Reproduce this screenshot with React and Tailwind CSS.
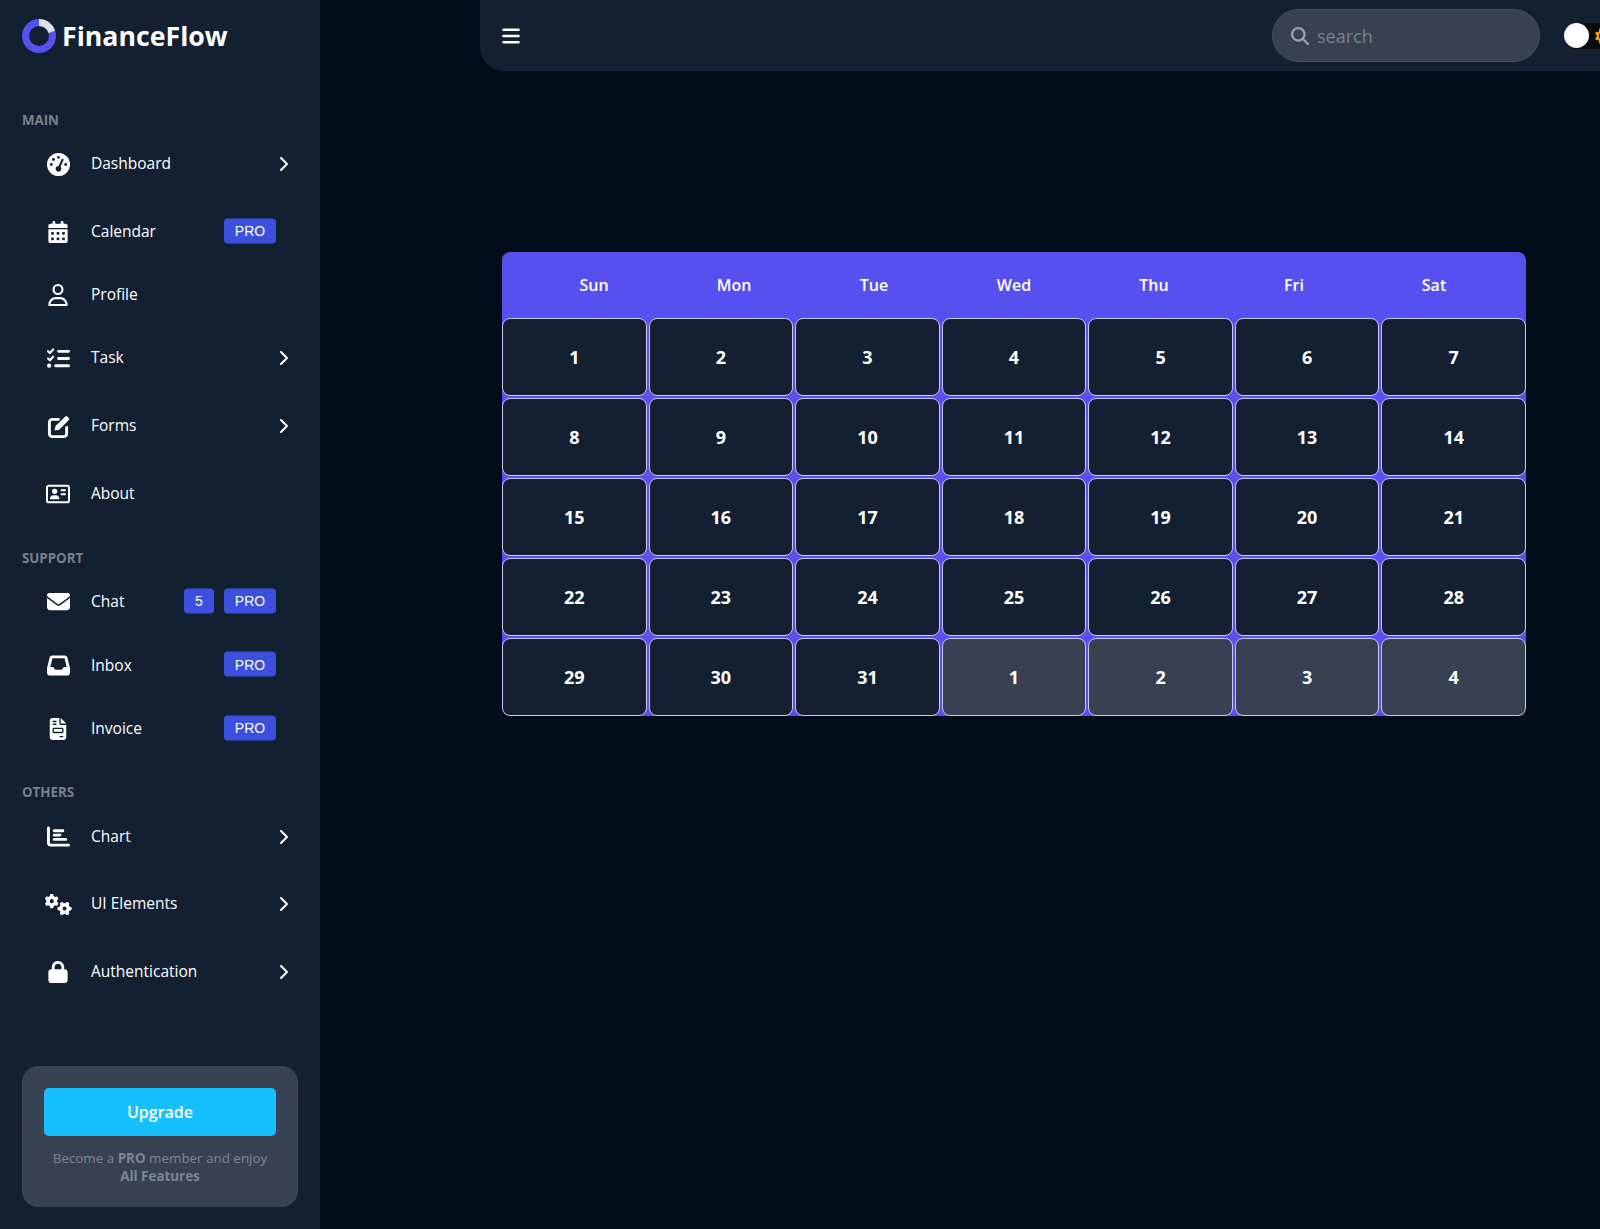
import React from "react";
import {
  FaBars,
  FaCalendarDays,
  FaChartBar,
  FaChevronRight,
  FaEnvelope,
  FaFileInvoice,
  FaGaugeHigh,
  FaGears,
  FaInbox,
  FaListCheck,
  FaLock,
  FaMagnifyingGlass,
  FaRegAddressCard,
  FaRegUser,
  FaSun,
} from "react-icons/fa6";

const EditIcon = ({ size }) => (
  <svg width={size} height={size} viewBox="0 0 24 24" fill="none">
    <path
      d="M12 4.5H5.5a3 3 0 0 0-3 3v12a3 3 0 0 0 3 3h12a3 3 0 0 0 3-3V13"
      stroke="currentColor"
      strokeWidth="3"
      strokeLinecap="round"
    />
    <path
      d="M8 16.2l.9-4.6L18.8 1.7a1.9 1.9 0 0 1 2.7 0l1.1 1.1a1.9 1.9 0 0 1 0 2.7L12.7 15.3z"
      fill="currentColor"
    />
  </svg>
);

const sections = [
  {
    title: "MAIN",
    titleClass: "mt-[58px] h-[19px]",
    items: [
      { label: "Dashboard", icon: FaGaugeHigh, size: 23, height: "h-[68px]", arrow: true },
      { label: "Calendar", icon: FaCalendarDays, size: 22, height: "h-[67px]", pro: true },
      { label: "Profile", icon: FaRegUser, size: 22, height: "h-[59px]" },
      { label: "Task", icon: FaListCheck, size: 23, height: "h-[68px]", arrow: true },
      { label: "Forms", icon: EditIcon, size: 23, height: "h-[68px]", arrow: true },
      { label: "About", icon: FaRegAddressCard, size: 24, height: "h-[67px]" },
    ],
  },
  {
    title: "SUPPORT",
    titleClass: "mt-[20px] h-[23px]",
    items: [
      { label: "Chat", icon: FaEnvelope, size: 23, height: "h-[63.5px]", pro: true, count: 5 },
      { label: "Inbox", icon: FaInbox, size: 23, height: "h-[63.5px]", pro: true },
      { label: "Invoice", icon: FaFileInvoice, size: 22, height: "h-[63px]", pro: true },
    ],
  },
  {
    title: "OTHERS",
    titleClass: "mt-[23px] h-[20px]",
    items: [
      { label: "Chart", icon: FaChartBar, size: 23, height: "h-[67px]", arrow: true },
      { label: "UI Elements", icon: FaGears, size: 27, height: "h-[68px]", arrow: true },
      { label: "Authentication", icon: FaLock, size: 22, height: "h-[68px]", arrow: true },
    ],
  },
];

const days = ["Sun", "Mon", "Tue", "Wed", "Thu", "Fri", "Sat"];

const dates = [
  ...Array.from({ length: 31 }, (_, i) => ({ day: i + 1, muted: false })),
  ...[1, 2, 3, 4].map((day) => ({ day, muted: true })),
];

const Badge = ({ children, className }) => (
  <span
    className={`absolute top-1/2 flex h-[25px] -translate-y-[13.5px] items-center justify-center rounded-[4px] bg-[#3c50e0] font-['Liberation_Sans',sans-serif] text-sm text-white ${className}`}
  >
    {children}
  </span>
);

const NavItem = ({ item }) => {
  const Icon = item.icon;
  return (
    <div className={`relative flex items-center ${item.height}`}>
      <span className="ml-[36px] flex w-[44px] justify-center text-white">
        <Icon size={item.size} />
      </span>
      <span className="ml-[11px] text-[15.5px] text-white">{item.label}</span>
      {item.count && <Badge className="left-[184px] w-[30px]">{item.count}</Badge>}
      {item.pro && <Badge className="left-[224px] w-[52px]">PRO</Badge>}
      {item.arrow && <FaChevronRight size={16} className="absolute left-[274.5px] text-white" />}
    </div>
  );
};

const Sidebar = () => (
  <aside className="flex h-full w-[320px] shrink-0 flex-col bg-[#122031]">
    <div className="mt-[19px] flex h-[34px] items-center pl-[22px]">
      <svg width="34" height="34" viewBox="0 0 34 34">
        <circle cx="17" cy="17" r="13.5" fill="none" stroke="#5750f1" strokeWidth="7" />
        <path d="M17 3.5 A13.5 13.5 0 0 1 29.8 12.8" fill="none" stroke="#dfe1e8" strokeWidth="7" />
      </svg>
      <span className="ml-[6px] text-[26.7px] font-bold text-white">FinanceFlow</span>
    </div>
    {sections.map((section) => (
      <div key={section.title}>
        <p
          className={`flex items-center pl-[22px] text-[13.3px] font-bold text-[#7b808a] ${section.titleClass}`}
        >
          {section.title}
        </p>
        {section.items.map((item) => (
          <NavItem key={item.label} item={item} />
        ))}
      </div>
    ))}
    <div className="mx-[22px] mt-[60px] h-[141px] rounded-2xl bg-[#374151] px-[22px] pt-[22px] text-center">
      <button className="h-[48px] w-full rounded-[5px] bg-[#15bffd] text-base font-semibold text-white">
        Upgrade
      </button>
      <p className="mt-[13px] text-[13.4px] leading-[18px] text-[#7f8590]">
        Become a <b>PRO</b> member and enjoy
        <b className="block">All Features</b>
      </p>
    </div>
  </aside>
);

const Topbar = () => (
  <header className="ml-[160px] flex h-[71px] w-[1140px] items-center rounded-bl-3xl bg-[#122031] pl-[21px]">
    <FaBars size={20} className="text-white" />
    <div className="ml-auto flex h-[53px] w-[268px] items-center rounded-full border border-[#444d5d] bg-[#374151] pl-[18px]">
      <FaMagnifyingGlass size={18} className="text-[#9ca3af]" />
      <input
        placeholder="search"
        className="ml-[8px] w-[180px] bg-transparent text-lg text-white outline-none placeholder:text-[#7b808a]"
      />
    </div>
    <div className="ml-[24px] flex h-[26px] w-[56px] shrink-0 items-center rounded-full bg-[#0b0b0b]">
      <span className="h-[25px] w-[25px] rounded-full bg-white" />
      <FaSun size={16} className="ml-[6px] text-[#f59e0b]" />
    </div>
  </header>
);

const Calendar = () => (
  <div className="mt-[181px] ml-[182px] w-[1024px] overflow-hidden rounded-lg bg-[#5750f1]">
    <div className="grid h-[66px] grid-cols-7 items-center px-[22px]">
      {days.map((day) => (
        <span key={day} className="text-center text-base font-semibold text-white">
          {day}
        </span>
      ))}
    </div>
    <div className="grid grid-cols-7 gap-x-[2px] gap-y-[2px]">
      {dates.map((date, index) => (
        <div
          key={index}
          className={`flex h-[78px] items-center justify-center rounded-lg border border-[#c9cbf0] text-lg font-bold text-white ${
            date.muted ? "bg-[#374151]" : "bg-[#122031]"
          }`}
        >
          {date.day}
        </div>
      ))}
    </div>
  </div>
);

export default function App() {
  return (
    <div className="flex h-screen overflow-hidden bg-[#020d1a] font-['Open_Sans',sans-serif]">
      <Sidebar />
      <main className="min-w-0 flex-1">
        <Topbar />
        <Calendar />
      </main>
    </div>
  );
}
